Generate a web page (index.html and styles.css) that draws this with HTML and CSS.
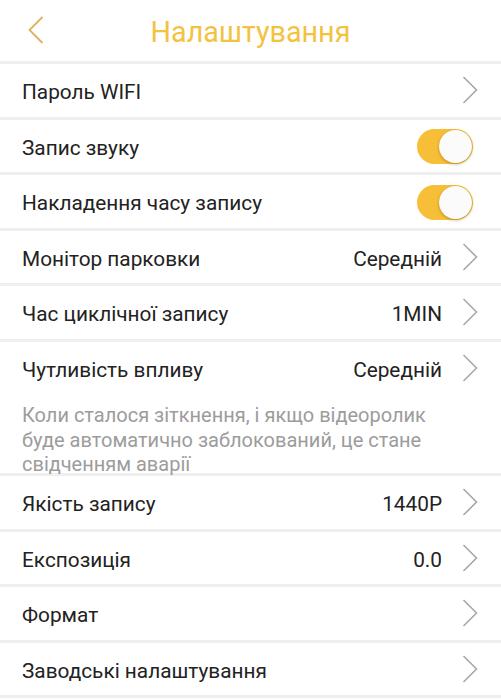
FILE: index.html
```html
<!DOCTYPE html>
<html lang="uk">

<head>
    <meta charset="UTF-8">
    <meta name="viewport" content="width=device-width, initial-scale=1.0">
    <title>Налаштування</title>
    <link rel="stylesheet" href="styles.css">
</head>

<body>
    <div class="header">
        <div class="back">
            <svg width="16" height="28" viewBox="0 0 16 28">
                <polyline points="14.5,1 1.5,14 14.5,27" fill="none" stroke="#dcb25e" stroke-width="1.8" />
            </svg>
        </div>
        <div class="title">Налаштування</div>
        <div></div>
    </div>

    <div class="row">
        <span class="label">Пароль WIFI</span>
        <svg class="arrow" width="16" height="28" viewBox="0 0 16 28">
            <polyline points="1.5,1 14.5,14 1.5,27" fill="none" stroke="#a8a8a8" stroke-width="1.6" />
        </svg>
    </div>
    <div class="row">
        <span class="label">Запис звуку</span>
        <div class="toggle"><div class="knob"></div></div>
    </div>
    <div class="row">
        <span class="label">Накладення часу запису</span>
        <div class="toggle"><div class="knob"></div></div>
    </div>
    <div class="row">
        <span class="label">Монітор парковки</span>
        <span class="value">Середній</span>
        <svg class="arrow" width="16" height="28" viewBox="0 0 16 28">
            <polyline points="1.5,1 14.5,14 1.5,27" fill="none" stroke="#a8a8a8" stroke-width="1.6" />
        </svg>
    </div>
    <div class="row">
        <span class="label">Час циклічної запису</span>
        <span class="value">1MIN</span>
        <svg class="arrow" width="16" height="28" viewBox="0 0 16 28">
            <polyline points="1.5,1 14.5,14 1.5,27" fill="none" stroke="#a8a8a8" stroke-width="1.6" />
        </svg>
    </div>
    <div class="row no-line">
        <span class="label">Чутливість впливу</span>
        <span class="value">Середній</span>
        <svg class="arrow" width="16" height="28" viewBox="0 0 16 28">
            <polyline points="1.5,1 14.5,14 1.5,27" fill="none" stroke="#a8a8a8" stroke-width="1.6" />
        </svg>
    </div>
    <div class="note">
        <div class="note-text">Коли сталося зіткнення, і якщо відеоролик буде автоматично заблокований, це стане свідченням аварії</div>
    </div>
    <div class="row">
        <span class="label">Якість запису</span>
        <span class="value">1440P</span>
        <svg class="arrow" width="16" height="28" viewBox="0 0 16 28">
            <polyline points="1.5,1 14.5,14 1.5,27" fill="none" stroke="#a8a8a8" stroke-width="1.6" />
        </svg>
    </div>
    <div class="row">
        <span class="label">Експозиція</span>
        <span class="value">0.0</span>
        <svg class="arrow" width="16" height="28" viewBox="0 0 16 28">
            <polyline points="1.5,1 14.5,14 1.5,27" fill="none" stroke="#a8a8a8" stroke-width="1.6" />
        </svg>
    </div>
    <div class="row">
        <span class="label">Формат</span>
        <svg class="arrow" width="16" height="28" viewBox="0 0 16 28">
            <polyline points="1.5,1 14.5,14 1.5,27" fill="none" stroke="#a8a8a8" stroke-width="1.6" />
        </svg>
    </div>
    <div class="row">
        <span class="label">Заводські налаштування</span>
        <svg class="arrow" width="16" height="28" viewBox="0 0 16 28">
            <polyline points="1.5,1 14.5,14 1.5,27" fill="none" stroke="#a8a8a8" stroke-width="1.6" />
        </svg>
    </div>
</body>

</html>
```

FILE: styles.css
```css
body {
    margin: 0;
    background-color: #ffffff;
    font-family: Roboto, "Noto Sans", sans-serif;
    color: #222222;
}

.header {
    display: grid;
    grid-template-columns: 1fr auto 1fr;
    align-items: center;
    height: 61px;
    border-bottom: 3px solid #efefef;
}

.back {
    display: flex;
    padding-left: 28px;
    padding-bottom: 1px;
}

.title {
    color: #f3c23f;
    font-size: 28.7px;
    padding-top: 2px;
}

.row {
    display: flex;
    align-items: center;
    height: 52.5px;
    padding: 0 23px 0 22px;
    border-bottom: 3px solid #efefef;
    font-size: 20.8px;
}

.row.no-line {
    border-bottom: none;
}

.label {
    flex: 1;
    padding-top: 4px;
}

.value {
    margin-right: 20px;
    padding-top: 4px;
}

.arrow {
    display: block;
}

.toggle {
    display: flex;
    justify-content: flex-end;
    align-items: center;
    width: 56px;
    height: 35px;
    border-radius: 18px;
    background-color: #f7bf38;
    margin-right: 5px;
    margin-top: 2px;
    padding: 0 1px;
    box-sizing: border-box;
}

.knob {
    width: 33px;
    height: 33px;
    border-radius: 50%;
    background-color: #fbfbfb;
    box-shadow: 0 1px 3px rgba(120, 90, 0, 0.5);
}

.note {
    height: 82px;
    box-sizing: border-box;
    padding: 9px 0 0 22px;
    font-size: 20px;
    line-height: 24.5px;
    color: #9c9c9c;
    border-bottom: 3px solid #efefef;
}

.note-text {
    max-width: 440px;
}
```
